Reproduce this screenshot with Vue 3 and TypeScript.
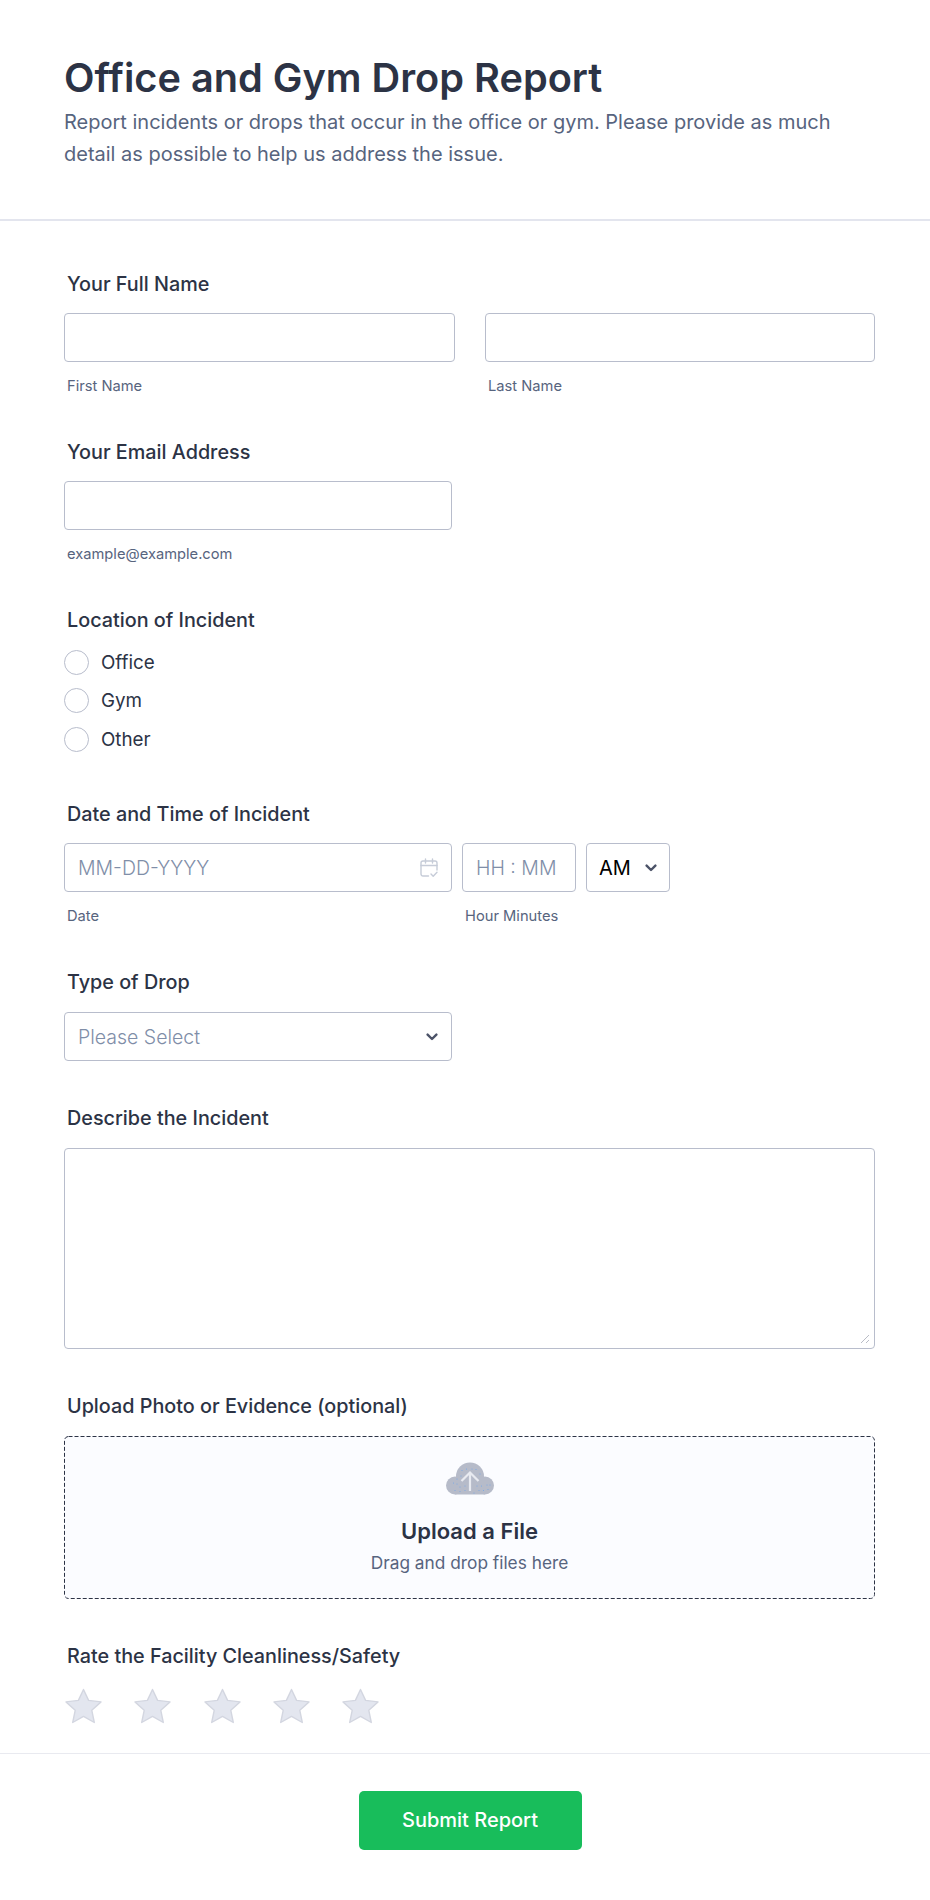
<script setup lang="ts">
const radios: string[] = ['Office', 'Gym', 'Other']
const stars: number[] = [1, 2, 3, 4, 5]
const dots: [number, number][] = [
  [16, 8.500], [20.500, 7], [26, 7], [30, 7.500], [34, 12], [15, 14], [11, 17], [7.500, 21], [11, 22],
  [14, 25], [19, 24], [9, 28.500], [14, 29.500], [19, 28.500], [31, 24], [35.500, 24], [41, 23],
  [44, 23], [33, 28.500], [37.500, 28.500], [42, 27.500], [28, 31],
]
</script>

<template>
  <main class="page">
    <header class="head">
      <h1>Office and Gym Drop Report</h1>
      <p>Report incidents or drops that occur in the office or gym. Please provide as much detail as possible to help us address the issue.</p>
    </header>

    <form class="form" @submit.prevent>
      <section class="field name-field">
        <div class="label">Your Full Name</div>
        <div class="two">
          <div class="col">
            <div class="box"></div>
            <div class="sub">First Name</div>
          </div>
          <div class="col">
            <div class="box"></div>
            <div class="sub">Last Name</div>
          </div>
        </div>
      </section>

      <section class="field email-field">
        <div class="label">Your Email Address</div>
        <div class="box narrow"></div>
        <div class="sub">example@example.com</div>
      </section>

      <section class="field location-field">
        <div class="label">Location of Incident</div>
        <div class="radios">
          <div v-for="r in radios" :key="r" class="radio">
            <span class="circle"></span>
            <span class="radio-text">{{ r }}</span>
          </div>
        </div>
      </section>

      <section class="field date-field">
        <div class="label">Date and Time of Incident</div>
        <div class="date-row">
          <div class="col date-col">
            <div class="box narrow between">
              <span class="ph">MM-DD-YYYY</span>
              <svg class="cal" width="18" height="20" viewBox="0 0 18 20" fill="none" stroke="#c6ccd8" stroke-width="1.400" stroke-linecap="round" stroke-linejoin="round">
                <path d="M8.500 18H3A2 2 0 0 1 1 16V5A2 2 0 0 1 3 3h12a2 2 0 0 1 2 2v7" />
                <path d="M1 7.500h16M5.500 1v4M12.500 1v4" />
                <path d="M11 16l2.200 2.200L17 14.200" />
              </svg>
            </div>
            <div class="sub">Date</div>
          </div>
          <div class="col time-col">
            <div class="box time"><span class="ph">HH : MM</span></div>
            <div class="sub">Hour Minutes</div>
          </div>
          <div class="box ampm between">
            <span class="am">AM</span>
            <svg class="chev" width="12" height="8" viewBox="0 0 12 8" fill="none" stroke="#4c5368" stroke-width="2.400" stroke-linecap="round" stroke-linejoin="round"><path d="M1.600 1.600 6 6l4.400-4.400" /></svg>
          </div>
        </div>
      </section>

      <section class="field type-field">
        <div class="label">Type of Drop</div>
        <div class="box narrow between">
          <span class="ph">Please Select</span>
          <svg class="chev" width="12" height="8" viewBox="0 0 12 8" fill="none" stroke="#4c5368" stroke-width="2.400" stroke-linecap="round" stroke-linejoin="round"><path d="M1.600 1.600 6 6l4.400-4.400" /></svg>
        </div>
      </section>

      <section class="field describe-field">
        <div class="label">Describe the Incident</div>
        <div class="box area">
          <svg class="grip" width="12" height="12" viewBox="0 0 12 12" stroke="#b9bcc6" stroke-width="1" fill="none"><path d="M2 10 10 2M7 10 10 7" /></svg>
        </div>
      </section>

      <section class="field upload-field">
        <div class="label">Upload Photo or Evidence (optional)</div>
        <div class="drop">
          <svg class="dash" width="811" height="163" viewBox="0 0 811 163" fill="none">
            <rect x="0.500" y="0.500" width="810" height="162" rx="4" stroke="#2c3345" stroke-dasharray="4 2" />
          </svg>
          <svg class="cloud" width="48" height="33" viewBox="0 0 48 33">
            <g fill="#b6bbc9">
              <circle cx="24" cy="14.500" r="14" />
              <circle cx="9" cy="23.500" r="9" />
              <circle cx="39" cy="23.500" r="9" />
              <rect x="9" y="18" width="30" height="14.500" />
            </g>
            <circle v-for="d in dots" :key="d[0] + '-' + d[1]" :cx="d[0]" :cy="d[1]" r="0.500" fill="#6fa6ea" />
            <path fill="none" stroke="#e8eaf0" stroke-width="2.200" d="M24 29V11M15.500 19 24 10.500l8.500 8.500" />
          </svg>
          <div class="drop-title">Upload a File</div>
          <div class="drop-sub">Drag and drop files here</div>
        </div>
      </section>

      <section class="field rate-field">
        <div class="label">Rate the Facility Cleanliness/Safety</div>
        <div class="stars">
          <svg v-for="s in stars" :key="s" width="39" height="37" viewBox="0 0 39 37">
            <path fill="#e3e6ef" stroke="#d3d6e0" stroke-width="1.400" stroke-linejoin="round" d="M19.500 1.500 24.600 12.400 37 13.900 27.800 22.300 30.300 34.500 19.500 28.400 8.700 34.500 11.200 22.300 2 13.900 14.400 12.400Z" />
          </svg>
        </div>
      </section>
    </form>

    <footer class="foot">
      <button type="button" class="submit">Submit Report</button>
    </footer>
  </main>
</template>

<style>
html, body { margin: 0; background: #fff; }
</style>

<style scoped>
.page {
  width: 930px;
  height: 1900px;
  box-sizing: border-box;
  font-family: Inter, "Liberation Sans", sans-serif;
  color: #2c3345;
  background: #fff;
  overflow: hidden;
}
.head {
  height: 221px;
  box-sizing: border-box;
  padding: 53px 52px 0 64px;
  border-bottom: 2px solid #e3e5ee;
}
h1 {
  margin: 0;
  font-size: 39.700px;
  line-height: 50px;
  font-weight: 600;
  color: #2c3345;
}
.head p {
  margin: 3px 0 0;
  font-size: 20px;
  line-height: 32px;
  color: #57647e;
}
.form { padding: 0 56px 0 64px; }
.field { display: block; }
.label {
  padding-left: 3px;
  font-size: 19.800px;
  line-height: 24px;
  font-weight: 450;
  color: #2c3345;
}
.name-field { padding-top: 51px; }
.email-field { padding-top: 45px; }
.location-field { padding-top: 45px; }
.date-field { padding-top: 43px; }
.type-field { padding-top: 45px; }
.describe-field { padding-top: 45px; }
.upload-field { padding-top: 45px; }
.rate-field { padding-top: 45px; }
.two {
  display: grid;
  grid-template-columns: 391px 390px;
  gap: 30px;
  margin-top: 17px;
}
.box {
  box-sizing: border-box;
  height: 49px;
  border: 1px solid #b8bdcc;
  border-radius: 4px;
  background: #fff;
}
.narrow { width: 388px; margin-top: 18px; }
.email-field .narrow { margin-top: 17px; }
.between {
  display: flex;
  align-items: center;
  justify-content: space-between;
  padding: 2px 13px 0 13px;
}
.sub {
  margin-top: 15px;
  padding-left: 3px;
  font-size: 14.700px;
  line-height: 18px;
  color: #57647e;
}
.radios { margin-top: 11px; }
.radio {
  display: flex;
  align-items: center;
  height: 38.500px;
}
.circle {
  box-sizing: border-box;
  width: 25px;
  height: 25px;
  border: 1.500px solid #b8bdcc;
  border-radius: 50%;
}
.radio-text {
  margin-left: 12px;
  font-size: 18.800px;
  color: #2c3345;
}
.date-row {
  display: flex;
  gap: 10px;
  margin-top: 17px;
}
.date-col { width: 388px; }
.date-col .narrow { margin-top: 0; }
.time-col { width: 114px; }
.time {
  display: flex;
  align-items: center;
  padding: 2px 0 0 13px;
}
.ampm { width: 84px; padding: 2px 12px 0 12px; }
.ph { font-size: 19.500px; font-weight: 300; color: #7f8ea8; }
.am { font-size: 20px; color: #000; }
.area {
  position: relative;
  width: 811px;
  height: 201px;
  margin-top: 18px;
}
.grip { position: absolute; right: 3px; bottom: 3px; }
.drop {
  position: relative;
  box-sizing: border-box;
  width: 811px;
  height: 163px;
  margin-top: 18px;
  padding-top: 26px;
  border-radius: 4px;
  background: #fbfcff;
  text-align: center;
}
.dash { position: absolute; left: 0; top: 0; }
.cloud { display: block; margin: 0 auto; }
.drop-title {
  margin-top: 22px;
  font-size: 22px;
  line-height: 28px;
  font-weight: 600;
  color: #2c3345;
}
.drop-sub {
  margin-top: 7px;
  font-size: 17.300px;
  line-height: 22px;
  color: #57647e;
}
.stars {
  display: flex;
  gap: 30.300px;
  margin-top: 20px;
}
.foot {
  margin-top: 28px;
  padding: 37px 0 0 10px;
  border-top: 1px solid #e9eaf0;
  display: flex;
  justify-content: center;
}
.submit {
  width: 223px;
  height: 59px;
  border: 0;
  border-radius: 5px;
  background: #18bd5b;
  color: #fff;
  font-family: inherit;
  font-size: 20px;
  font-weight: 500;
}
</style>
